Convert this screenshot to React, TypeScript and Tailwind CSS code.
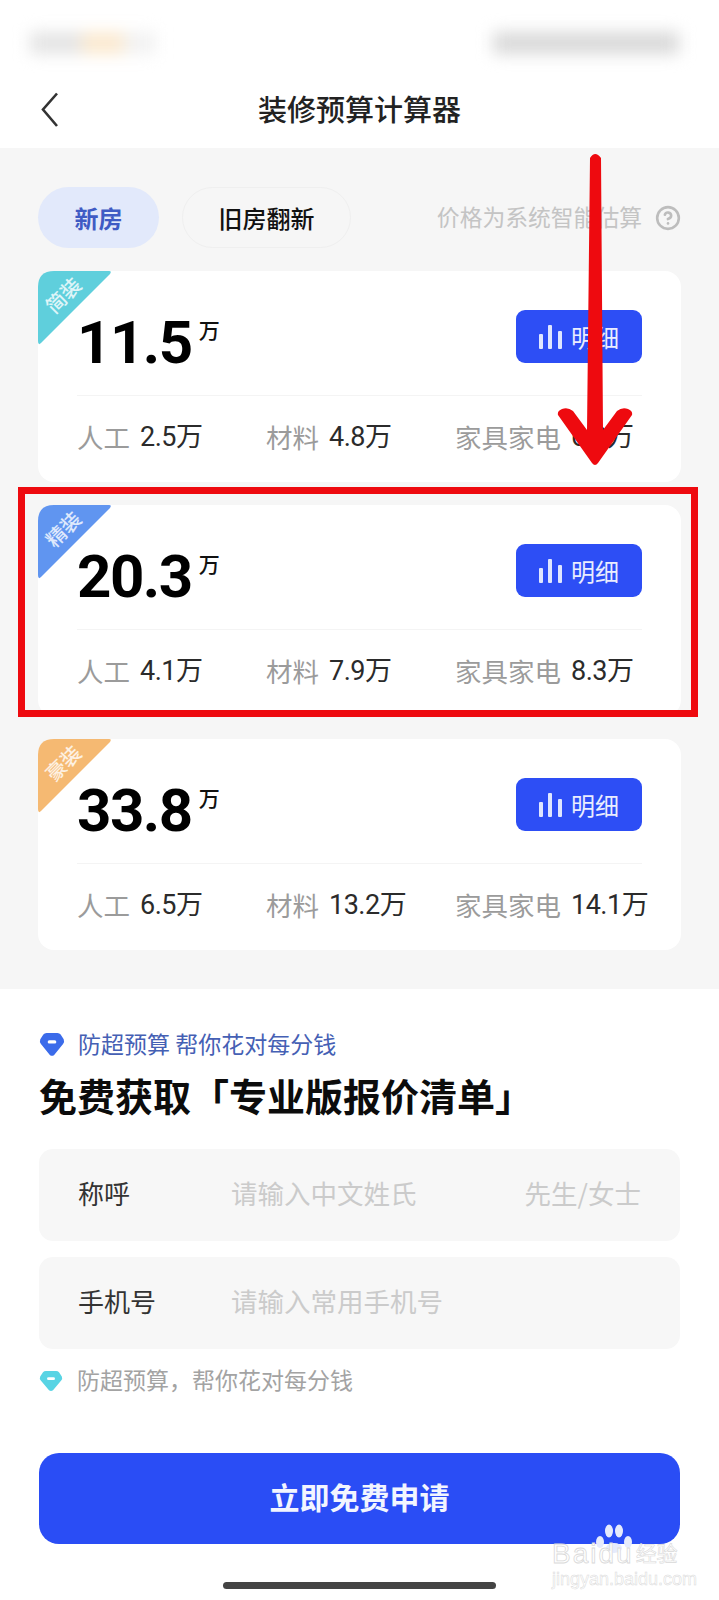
import { CircleHelp } from 'lucide-react'

const PLANS = [
  { tag: '简装', total: '11.5', color: '#5fcfdc', items: ['2.5万', '4.8万', '6.9万'] },
  { tag: '精装', total: '20.3', color: '#6095f0', items: ['4.1万', '7.9万', '8.3万'] },
  { tag: '豪装', total: '33.8', color: '#f5b972', items: ['6.5万', '13.2万', '14.1万'] },
]

function Gem({ color, width, height }: { color: string; width: number; height: number }) {
  return (
    <svg width={width} height={height} viewBox="0 0 24 24" preserveAspectRatio="none" className="mt-[3px] shrink-0">
      <path d="M7 1H17Q19 1 20 2.5L22.8 7Q23.8 9.5 22.2 11.5L14 22Q12 23.6 10 22L1.8 11.5Q0.2 9.5 1.2 7L4 2.5Q5 1 7 1Z" fill={color} />
      <rect x="8" y="8" width="8" height="3" rx="1.5" fill="#fff" />
    </svg>
  )
}

function PlanCard({ tag, total, color, items }: (typeof PLANS)[number]) {
  return (
    <div className="relative h-[211px] rounded-[16px] bg-white px-[39px]">
      <svg width="74" height="74" viewBox="0 0 74 74" className="absolute left-0 top-0">
        <path d="M16 0H71Q74 0 72 3L3 72Q0 75 0 70V16Q0 0 16 0Z" fill={color} />
      </svg>
      <span className="absolute left-[3px] top-[12px] w-[44px] -rotate-45 text-center text-[20px] font-medium leading-[24px] text-white/80">
        {tag}
      </span>
      <div className="flex h-[125px] items-start justify-between border-b border-[#f4f4f4]">
        <div className="flex items-start pt-[42px]">
          <span className="font-['Roboto',sans-serif] text-[60px] font-bold leading-[60px] tracking-[-1.5px] text-black">
            {total}
          </span>
          <span className="ml-[7px] mt-[4px] text-[21px] font-medium leading-[24px] text-[#111]">万</span>
        </div>
        <button className="mt-[39px] flex h-[53px] w-[126px] items-center justify-center gap-[9px] rounded-[9px] bg-[#2d4ef5] text-[24px] leading-none text-white/90">
          <svg width="23" height="24" viewBox="0 0 23 24">
            <rect x="0" y="9" width="4" height="15" rx="1" fill="#dfe6ff" />
            <rect x="9" y="0" width="4" height="24" rx="1" fill="#dfe6ff" />
            <rect x="19" y="6" width="4" height="18" rx="1" fill="#dfe6ff" />
          </svg>
          明细
        </button>
      </div>
      <div className="flex h-[82px] items-center whitespace-nowrap text-[26.5px]">
        {['人工', '材料', '家具家电'].map((label, i) => (
          <div key={label} className={`flex shrink-0 items-center gap-[10px] ${i === 2 ? '' : 'w-[189px]'}`}>
            <span className="leading-[36px] text-[#9b9b9b]">{label}</span>
            <span className="font-['Roboto','Noto_Sans_CJK_SC',sans-serif] text-[27px] leading-[36px] tracking-[-0.5px] text-[#2b2b2b]">
              {items[i]}
            </span>
          </div>
        ))}
      </div>
    </div>
  )
}

function Field({ label, placeholder, suffix }: { label: string; placeholder: string; suffix?: string }) {
  return (
    <div className="flex h-[92px] items-center rounded-[14px] bg-[#f7f7f7] pb-[5px] pl-[39px] pr-[39px] text-[26.5px]">
      <span className="w-[153px] text-[26px] text-[#333]">{label}</span>
      <span className="flex-1 text-[#cbcbcb]">{placeholder}</span>
      {suffix && <span className="text-[#cbcbcb]">{suffix}</span>}
    </div>
  )
}

export default function App() {
  return (
    <div className="relative h-[1600px] w-[719px] overflow-hidden bg-white font-['Noto_Sans_CJK_SC',sans-serif]">
      {/* blurred status bar */}
      <div className="flex h-[72px] justify-between pl-[30px] pr-[40px] pt-[32px]">
        <div className="flex h-[22px] w-[126px] blur-[8px]">
          <div className="w-[52px] bg-[#e4e4e4]" />
          <div className="w-[42px] bg-[#fbe9cf]" />
          <div className="w-[32px] bg-[#f2f2f2]" />
        </div>
        <div className="h-[22px] w-[186px] bg-[#d9d9d9] blur-[8px]" />
      </div>

      <div className="relative flex h-[76px] items-center justify-center pb-[4px]">
        <svg width="18" height="36" viewBox="0 0 18 36" className="absolute left-[41px] top-[20px]">
          <path d="M16 1.5L2 17.5L16 34" fill="none" stroke="#333" strokeWidth="2.6" />
        </svg>
        <h1 className="text-[29px] font-medium leading-none text-[#222]">装修预算计算器</h1>
      </div>

      <div className="flex h-[841px] flex-col bg-[#f6f6f6] px-[38px] pt-[39px]">
        <div className="flex h-[61px] items-center">
          <div className="flex h-full w-[121px] items-center justify-center rounded-full bg-[#e2e9fb] text-[24px] font-semibold text-[#3f5bc4]">
            新房
          </div>
          <div className="ml-[23px] flex h-full w-[169px] items-center justify-center rounded-full border border-[#efefef] text-[24px] font-medium text-[#111]">
            旧房翻新
          </div>
          <div className="ml-auto flex items-center gap-[13px] text-[22.8px] text-[#c4c4c4]">
            价格为系统智能估算
            <CircleHelp size={26} strokeWidth={2.4} className="text-[#bdbdbd]" />
          </div>
        </div>
        <div className="mt-[23px] flex flex-col gap-[23px]">
          {PLANS.map((p) => (
            <PlanCard key={p.tag} {...p} />
          ))}
        </div>
      </div>

      <div className="flex flex-col px-[39px]">
        <div className="mt-[41px] flex h-[26px] items-center gap-[13px] text-[23px] leading-none text-[#4560b4]">
          <Gem color="#3b6bea" width={26} height={25} />
          防超预算 帮你花对每分钱
        </div>
        <h2 className="mt-[14px] text-[38px] font-bold leading-[50px] text-[#0c0c0c]">免费获取「专业版报价清单」</h2>
        <div className="mt-[29px] flex flex-col gap-[16px]">
          <Field label="称呼" placeholder="请输入中文姓氏" suffix="先生/女士" />
          <Field label="手机号" placeholder="请输入常用手机号" />
        </div>
        <div className="mt-[17px] flex h-[26px] items-center gap-[14px] text-[23px] leading-none text-[#a3a3a3]">
          <Gem color="#58d4e4" width={24} height={22} />
          防超预算，帮你花对每分钱
        </div>
        <button className="mt-[61px] flex h-[91px] items-center justify-center rounded-[20px] bg-[#2a4df5] pb-[5px] text-[30px] font-bold leading-none text-[#f2f5ff]">
          立即免费申请
        </button>
      </div>

      {/* annotations added on top of the screenshot */}
      <div className="absolute left-[18px] top-[487px] h-[230px] w-[680px] border-[7px] border-[#ee0a0f]" />
      <svg width="90" height="330" viewBox="0 0 90 330" className="absolute left-[550px] top-[150px]">
        <path
          d="M40 8Q45 0 51 8L53 280L67 261Q72 257 78 259Q83 261 82 265L48 313Q45 317 42 313L8 265Q7 261 12 259Q18 257 23 261L37 280Z"
          fill="#ee0a0f"
        />
      </svg>

      {/* baidu watermark */}
      <div className="absolute left-[552px] top-[1523px] flex w-[130px] flex-col text-white">
        <svg width="40" height="30" viewBox="0 0 40 30" className="absolute left-[42px] top-0">
          <g fill="#e6ebfc">
            <ellipse cx="6" cy="19" rx="4" ry="6" />
            <ellipse cx="15" cy="8" rx="4" ry="6.5" />
            <ellipse cx="25" cy="8" rx="4" ry="6.5" />
            <ellipse cx="34" cy="19" rx="4" ry="6" />
            <ellipse cx="20" cy="25" rx="8" ry="5" />
          </g>
        </svg>
        <div className="relative mt-[17px] flex items-center whitespace-nowrap font-['Liberation_Sans','Noto_Sans_CJK_SC',sans-serif] leading-[28px] text-white">
          <span className="text-[28px] tracking-[2px] [-webkit-text-stroke:0.8px_#d9d9d9]">Baidu</span>
          <span className="ml-[2px] text-[21px] [-webkit-text-stroke:0.6px_#d9d9d9]">经验</span>
        </div>
        <span className="whitespace-nowrap font-['Liberation_Sans',sans-serif] text-[18px] leading-[22px] text-white [-webkit-text-stroke:0.5px_#d9d9d9]">
          jingyan.baidu.com
        </span>
      </div>

      <div className="absolute left-[223px] top-[1582px] h-[7px] w-[273px] rounded-full bg-[#444]" />
    </div>
  )
}
